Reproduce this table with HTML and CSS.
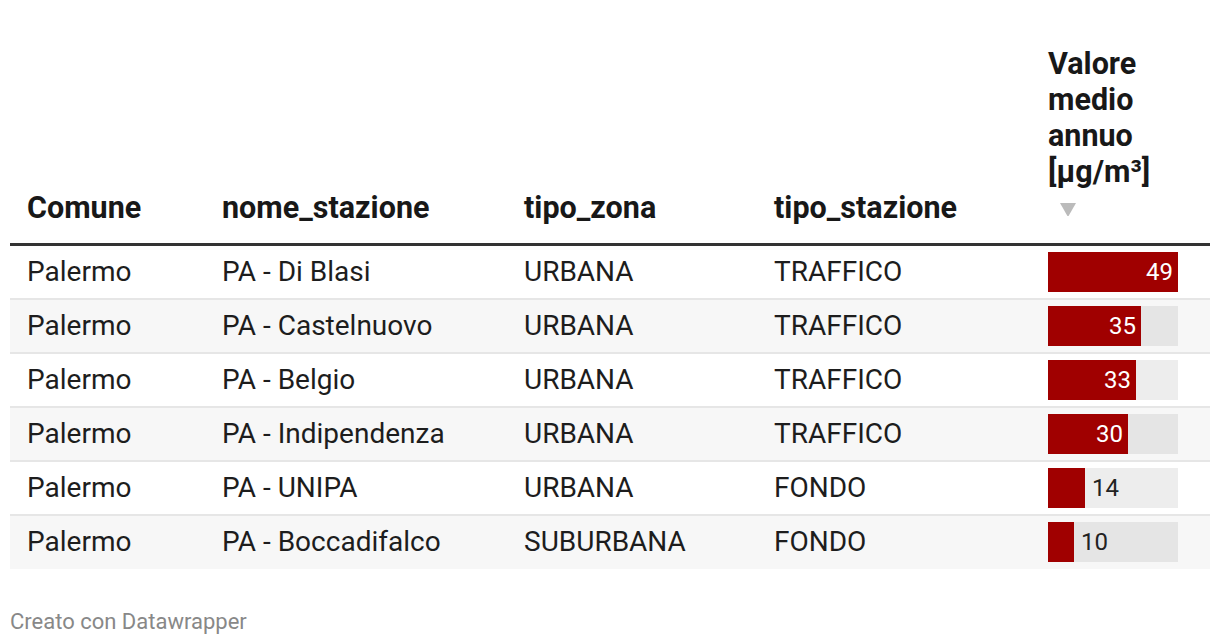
FILE: index.html
```html
<!DOCTYPE html>
<html lang="it">
<head>
<meta charset="utf-8">
<title>Valore medio annuo</title>
<link rel="stylesheet" href="styles.css">
</head>
<body>
<div class="chart">
  <table class="data">
    <colgroup>
      <col class="c1"><col class="c2"><col class="c3"><col class="c4"><col class="c5">
    </colgroup>
    <thead>
      <tr>
        <th>Comune</th>
        <th>nome_stazione</th>
        <th>tipo_zona</th>
        <th>tipo_stazione</th>
        <th class="sorted"><span class="hlabel">Valore medio annuo [µg/m³]</span><span class="arrow"><svg width="16" height="14" viewBox="0 0 16 14"><path d="M0 1 L16 1 L8 15 Z" fill="#bbbbbb"/></svg></span></th>
      </tr>
    </thead>
    <tbody>
      <tr><td>Palermo</td><td>PA - Di Blasi</td><td>URBANA</td><td>TRAFFICO</td><td><div class="track"><div class="bar" style="width:130px"><span class="in">49</span></div></div></td></tr>
      <tr><td>Palermo</td><td>PA - Castelnuovo</td><td>URBANA</td><td>TRAFFICO</td><td><div class="track"><div class="bar" style="width:93px"><span class="in">35</span></div></div></td></tr>
      <tr><td>Palermo</td><td>PA - Belgio</td><td>URBANA</td><td>TRAFFICO</td><td><div class="track"><div class="bar" style="width:88px"><span class="in">33</span></div></div></td></tr>
      <tr><td>Palermo</td><td>PA - Indipendenza</td><td>URBANA</td><td>TRAFFICO</td><td><div class="track"><div class="bar" style="width:80px"><span class="in">30</span></div></div></td></tr>
      <tr><td>Palermo</td><td>PA - UNIPA</td><td>URBANA</td><td>FONDO</td><td><div class="track"><div class="bar" style="width:37px"></div><span class="out">14</span></div></td></tr>
      <tr><td>Palermo</td><td>PA - Boccadifalco</td><td>SUBURBANA</td><td>FONDO</td><td><div class="track"><div class="bar" style="width:26px"></div><span class="out">10</span></div></td></tr>
    </tbody>
  </table>
  <div class="footer">Creato con Datawrapper</div>
</div>
</body>
</html>
```
FILE: styles.css
```css
* { box-sizing: border-box; }
html, body { margin: 0; padding: 0; background: #ffffff; }
body {
  font-family: Roboto, "Liberation Sans", sans-serif;
  color: #1d1d1d;
}
.chart {
  padding: 46px 10px 0 10px;
}
.data {
  width: 1200px;
  border-collapse: collapse;
  table-layout: fixed;
}
.c1 { width: 195px; }
.c2 { width: 302px; }
.c3 { width: 250px; }
.c4 { width: 274px; }
.c5 { width: 179px; }
.data th {
  text-align: left;
  vertical-align: bottom;
  font-size: 30.5px;
  font-weight: 700;
  line-height: 36px;
  color: #181818;
  padding: 0 17px 17px 17px;
  border-bottom: 3px solid #333333;
}
.hlabel {
  display: block;
  max-width: 130px;
}
.arrow {
  display: block;
  height: 36px;
  padding-top: 12px;
  padding-left: 12px;
  line-height: 0;
}
.data td {
  height: 54px;
  padding: 0 17px;
  font-size: 28px;
  line-height: 36px;
  vertical-align: middle;
  border-bottom: 2px solid #e6e6e6;
  white-space: nowrap;
}
.data tbody tr:nth-child(even) td { background: #f7f7f7; }
.data tbody tr:last-child td { border-bottom: none; height: 54px; }
.track {
  position: relative;
  width: 130px;
  height: 40px;
  background: rgba(0, 0, 0, 0.07);
  display: flex;
  align-items: center;
}
.bar {
  height: 40px;
  background: #a00000;
  display: flex;
  align-items: center;
  justify-content: flex-end;
}
.in {
  color: #ffffff;
  font-size: 24px;
  padding-right: 5px;
}
.out {
  color: #222222;
  font-size: 24px;
  padding-left: 7px;
}
.footer {
  margin-top: 40px;
  font-size: 22px;
  color: #888888;
}
```
